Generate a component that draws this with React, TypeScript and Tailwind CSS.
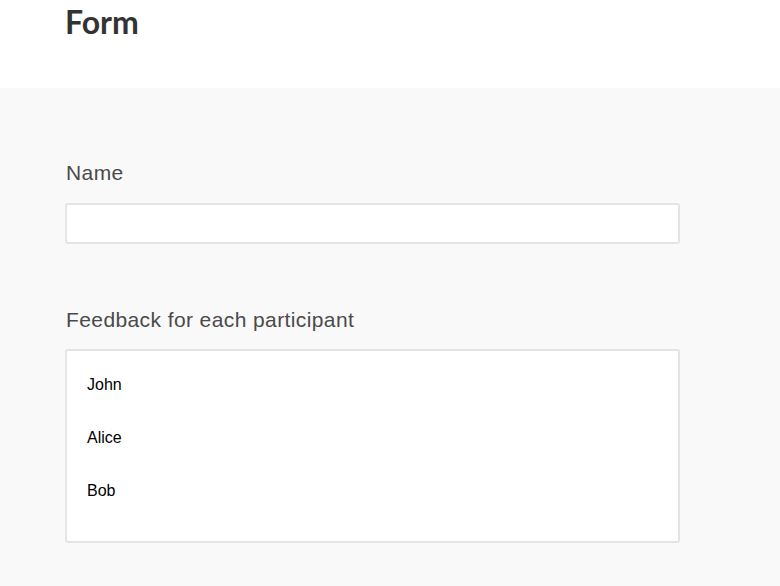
export default function App() {
  const participants = ['John', 'Alice', 'Bob'];

  return (
    <div className="min-h-screen flex flex-col bg-[#f9f9f9] font-['Liberation_Sans',Arial,sans-serif]">
      {/* header */}
      <div className="h-[88px] bg-white px-[65px]">
        <h1 className="text-[32px] leading-[44px] font-bold text-[#333] font-['Lato','Liberation_Sans',sans-serif]">
          Form
        </h1>
      </div>

      {/* body */}
      <div className="flex-1 px-[65px] pt-[73px]">
        <div className="w-[615px]">
          <label className="block text-[21px] leading-[24px] tracking-[0.4px] text-[#4a4a4a] pl-[1px]">Name</label>
          <input
            type="text"
            className="mt-[18px] block w-full h-[41px] bg-white border-2 border-[#e4e4e4] rounded-[3px] outline-none"
          />

          <label className="block mt-[64px] text-[21px] leading-[24px] tracking-[0.4px] text-[#4a4a4a] pl-[1px]">
            Feedback for each participant
          </label>
          <div className="mt-[17px] h-[194px] bg-white border-2 border-[#e4e4e4] rounded-[3px] px-[20px] pt-[24px]">
            {participants.map((p) => (
              <div key={p} className="text-[16px] leading-[19px] text-black mb-[34px]">
                {p}
              </div>
            ))}
          </div>
        </div>
      </div>
    </div>
  );
}
